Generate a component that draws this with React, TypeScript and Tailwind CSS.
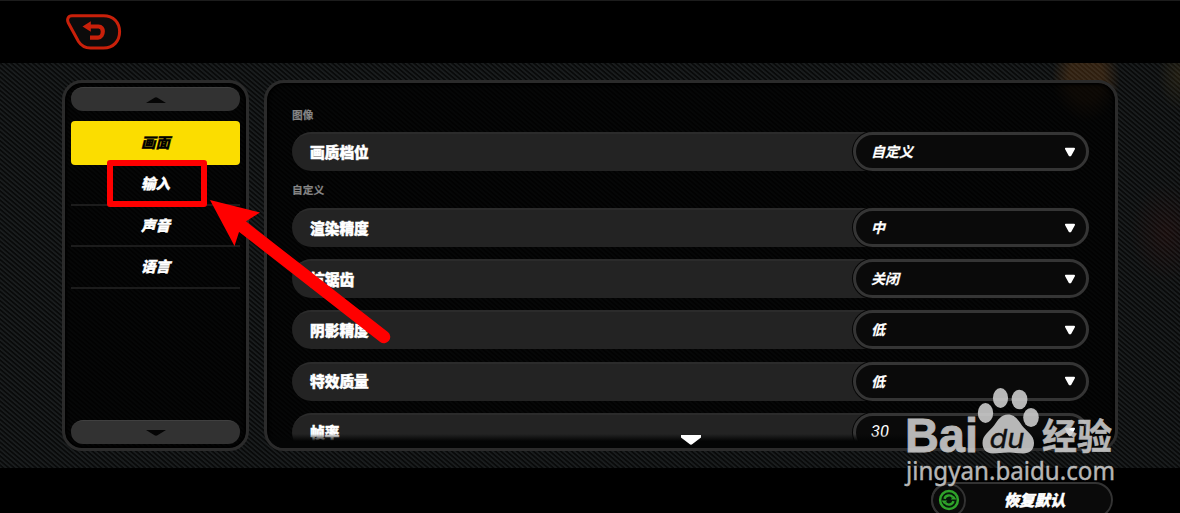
import clsx from "clsx";

const tabs = ["画面", "输入", "声音", "语言"];

type Setting = { label: string; value: string };

const imageSettings: Setting[] = [{ label: "画质档位", value: "自定义" }];

const customSettings: Setting[] = [
  { label: "渲染精度", value: "中" },
  { label: "抗锯齿", value: "关闭" },
  { label: "阴影精度", value: "低" },
  { label: "特效质量", value: "低" },
  { label: "帧率", value: "30" },
];

const BackButton = () => (
  <button className="block w-14 h-9 mt-[13px] ml-[66px]">
    <svg viewBox="0 0 56 36" className="w-14 h-9">
      <path
        d="M6 1.7H37.5C47.5 1.7 53.6 8.5 53.6 17.8C53.6 27 47.5 34 37.5 34H24.5C18.5 34 15 31.5 12.5 27.5L2.4 9C0.6 5.5 2 1.7 6 1.7Z"
        fill="#0c0b0b"
        stroke="#c9200a"
        strokeWidth="3"
      />
      <path
        d="M24 12.5H32.5C35.5 12.5 36.8 14.8 36.8 17.2C36.8 20.5 35 23.7 32 23.7H24"
        fill="none"
        stroke="#c9200a"
        strokeWidth="4.2"
      />
      <path d="M16.5 12.5L24.8 7.2V17.8Z" fill="#c9200a" />
    </svg>
  </button>
);

const ScrollButton = ({ down = false }: { down?: boolean }) => (
  <button className="w-full h-6 shrink-0 rounded-full bg-[#323232] border-t border-[#404040] flex items-center justify-center">
    <svg viewBox="0 0 20 6" className={clsx("w-5 h-1.5", down && "rotate-180")}>
      <path d="M0 6L8.5 0.7Q10 0 11.5 0.7L20 6Z" fill="#050505" />
    </svg>
  </button>
);

const SettingRow = ({ label, value }: Setting) => (
  <div className="h-[39px] shrink-0 rounded-full bg-[#232323] border-t-2 border-[#2b2b2b] flex items-center justify-between pl-[18px] -mr-px">
    <span className="text-[14.7px] font-black text-white leading-none pb-px [-webkit-text-stroke:0.5px_white]">
      {label}
    </span>
    <button className="w-[236px] h-[39px] -mt-0.5 rounded-full border-[3px] border-[#353535] bg-[#0a0a0a] shadow-[0_0_0_1px_#060606] flex items-center justify-between pl-[15px] pr-[10px]">
      <span
        className={clsx(
          "italic text-white leading-none",
          /^\d+$/.test(value)
            ? "text-[16.5px] font-normal font-['Roboto',sans-serif]"
            : "text-[14px] font-bold pb-px [-webkit-text-stroke:0.2px_white]"
        )}
      >
        {value}
      </span>
      <svg viewBox="0 0 12 10" className="w-3 h-2.5">
        <path d="M2 1.7H10L6.4 8.3H5.6Z" fill="#fff" stroke="#fff" strokeWidth="2" strokeLinejoin="round" />
      </svg>
    </button>
  </div>
);

const Watermark = () => (
  <svg viewBox="0 0 220 104" className="absolute left-[900px] top-[384px] w-[220px] h-[104px]">
    <g fill="#cfcfcf" opacity="0.88">
      <text
        x="5"
        y="67.5"
        fontFamily="Liberation Sans, sans-serif"
        fontWeight="700"
        fontSize="48"
        textLength="73"
        lengthAdjust="spacingAndGlyphs"
        stroke="#cfcfcf"
        strokeWidth="0.9"
      >
        Bai
      </text>
      <ellipse cx="85.5" cy="29" rx="7.7" ry="10" />
      <ellipse cx="100.5" cy="14" rx="7.6" ry="10" />
      <ellipse cx="119.5" cy="15.5" rx="7.9" ry="9.8" />
      <ellipse cx="131" cy="33.5" rx="7.8" ry="9.6" />
      <path d="M108 30.5C101 30.5 98 36 94 41.5C89 48 82.5 51 82.5 59C82.5 66 87 69.5 93 69.5C98.5 69.5 102 68.5 108 68.5C114 68.5 118 69.5 123 69.5C129.5 69.5 134 66 134 59C134 51 127 48 122 41.5C118 36 115 30.5 108 30.5Z" />
      <text
        x="142"
        y="65.5"
        fontFamily="'Noto Sans CJK SC', sans-serif"
        fontWeight="700"
        fontSize="36"
        textLength="70"
        lengthAdjust="spacingAndGlyphs"
        stroke="#cfcfcf"
        strokeWidth="0.5"
      >
        经验
      </text>
      <text
        x="6"
        y="96"
        fontFamily="'Noto Sans', sans-serif"
        fontSize="25.5"
        textLength="209"
        lengthAdjust="spacingAndGlyphs"
        stroke="#cfcfcf"
        strokeWidth="0.4"
      >
        jingyan.baidu.com
      </text>
    </g>
    <text
      x="89.5"
      y="63.5"
      fontFamily="Inter, sans-serif"
      fontWeight="400"
      fontSize="26"
      fontStyle="italic"
      textLength="35"
      lengthAdjust="spacingAndGlyphs"
      fill="#101010"
      stroke="#101010"
      strokeWidth="0.4"
    >
      du
    </text>
  </svg>
);

const Pointer = () => (
  <svg viewBox="0 0 190 150" className="absolute left-[205px] top-[195px] w-[190px] h-[150px]">
    <path d="M38 32L179 142" stroke="#ff0000" strokeWidth="12.5" strokeLinecap="round" />
    <path d="M5 5L55 17.5L41.5 26L34.5 35.5L29.5 51Z" fill="#ff0000" />
  </svg>
);

const App = () => (
  <div className="relative w-[1180px] h-[513px] overflow-hidden bg-black flex flex-col font-['Noto_Sans_CJK_SC',sans-serif]">
    <header className="h-[63px] shrink-0 border-t border-[#1c1c1c]">
      <BackButton />
    </header>

    {/* Diagonal weave with faint colour glows behind the panels */}
    <main className="h-[405px] shrink-0 pt-[17px] pl-[62px] pr-[62px] flex items-start gap-[15px] bg-[radial-gradient(ellipse_34px_44px_at_1086px_15px,#a8601c3c_50%,transparent),radial-gradient(ellipse_20px_36px_at_1178px_12px,#8a6a2028,transparent),radial-gradient(ellipse_36px_50px_at_1166px_170px,#5a100c2c,transparent),repeating-linear-gradient(40deg,#1b1e1f_0px,#181b1c_1.1px,#090a0a_1.8px,#090a0a_2.8px,#1b1e1f_3.5px)]">
      {/* Categories */}
      <nav className="w-[187px] h-[371px] shrink-0 rounded-[20px] border-[3px] border-[#2b2b2b] bg-black/75 bg-clip-padding px-1.5 pt-1 pb-1 flex flex-col shadow-[inset_0_0_3px_2px_#000]">
        <ScrollButton />
        <div className="grow pt-[10px]">
          {tabs.map((tab, i) => (
            <button
              key={tab}
              className={clsx(
                "w-full flex items-center justify-center text-[14.5px] font-black italic leading-none pb-px",
                i === 0
                  ? "h-[43.5px] rounded-[4px] bg-[#fbdd00] text-black [-webkit-text-stroke:0.3px_black]"
                  : "h-[41.4px] border-b-2 border-[#1c1c1c] text-white [-webkit-text-stroke:0.4px_white]"
              )}
            >
              {tab}
            </button>
          ))}
        </div>
        <ScrollButton down />
      </nav>

      {/* Settings */}
      <section className="w-[854px] h-[371px] shrink-0 rounded-[20px] border-[3px] border-[#2b2b2b] bg-black/75 bg-clip-padding pt-[24px] pl-[25px] pr-[27px] overflow-hidden relative shadow-[inset_0_0_3px_2px_#000]">
        <h2 className="h-[15px] text-[10.7px] font-bold text-[#858585] leading-[15px] [-webkit-text-stroke:0.2px_#858585]">
          图像
        </h2>
        <div className="mt-[10px] flex flex-col">
          {imageSettings.map((s) => (
            <SettingRow key={s.label} {...s} />
          ))}
        </div>
        <h2 className="mt-[11px] h-[15px] text-[10.7px] font-bold text-[#858585] leading-[15px] [-webkit-text-stroke:0.2px_#858585]">
          自定义
        </h2>
        <div className="mt-[11px] flex flex-col gap-[12.2px]">
          {customSettings.map((s) => (
            <SettingRow key={s.label} {...s} />
          ))}
        </div>
        {/* Fade over the clipped last row */}
        <div className="absolute inset-x-0 bottom-0 h-[14px] flex justify-center bg-[linear-gradient(to_bottom,transparent,#040505_50%)]">
          <svg viewBox="0 0 20 10" className="w-5 h-2.5 mt-px">
            <path d="M0 0H20V2.5L11.5 9Q10 10.3 8.5 9L0 2.5Z" fill="#fff" />
          </svg>
        </div>
      </section>
    </main>

    <footer className="h-[45px] flex justify-end pr-[67px] pt-[14px]">
      <button className="w-[182px] h-9 shrink-0 rounded-full border-2 border-[#333] bg-[#0a0a0a] flex items-center">
        <span className="w-[35px] h-[35px] -ml-0.5 shrink-0 rounded-full border-2 border-[#333] flex items-center justify-center">
          <svg viewBox="0 0 22 22" className="w-[22px] h-[22px]">
            <circle cx="11" cy="11" r="8.9" fill="#06180a" stroke="#2fa32a" strokeWidth="2.5" />
            <path
              d="M6.5 9.8A4.7 4.7 0 0 1 14.8 8.3M15.5 12.2A4.7 4.7 0 0 1 7.2 13.7"
              fill="none"
              stroke="#2fa32a"
              strokeWidth="2.4"
            />
            <path d="M12.8 10.6H18.4L15.8 6.8ZM9.2 11.4H3.6L6.2 15.2Z" fill="#2fa32a" />
          </svg>
        </span>
        <span className="grow text-center pr-2 pb-px text-[15.4px] font-black italic text-white leading-none [-webkit-text-stroke:0.5px_white]">
          恢复默认
        </span>
      </button>
    </footer>

    {/* Annotations */}
    <div className="absolute left-[107px] top-[160px] w-[100px] h-[47px] rounded-[3px] border-[6px] border-[#ff0000]" />
    <Pointer />
    <Watermark />
  </div>
);

export default App;
